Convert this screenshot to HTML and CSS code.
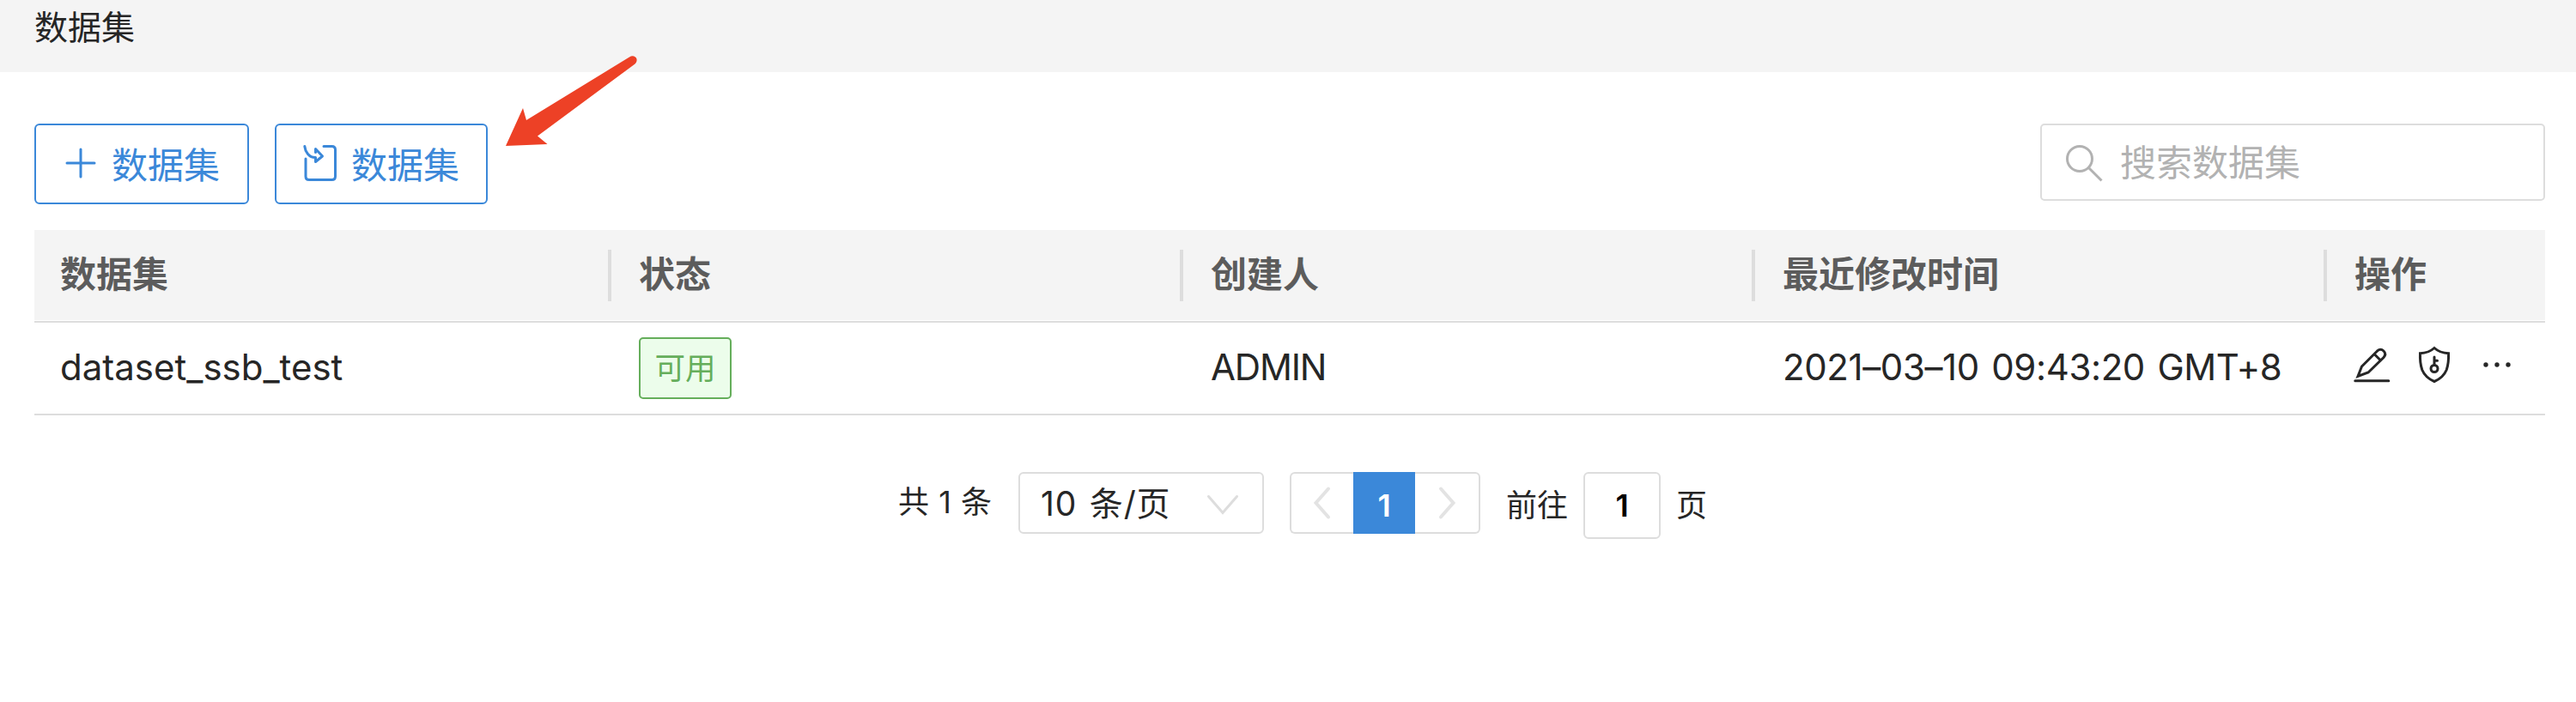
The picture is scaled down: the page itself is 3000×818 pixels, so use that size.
FILE: index.html
```html
<!DOCTYPE html>
<html lang="zh-CN">
<head>
<meta charset="utf-8">
<title>数据集</title>
<link rel="stylesheet" href="styles.css">
</head>
<body>
<header class="topbar"><h1 class="title">数据集</h1></header>
<main class="content">
  <div class="toolbar">
    <button class="btn btn-add">
      <svg class="plus" viewBox="0 0 36 36"><path d="M18 2v32M2 18h32"/></svg>
      <span>数据集</span>
    </button>
    <button class="btn btn-import">
      <svg class="import" viewBox="0 0 40 44"><path d="M24 2.500h9.500q4 0 4 4v31q0 4-4 4H7q-4 0-4-4V17"/><path d="M1.800 2.500C2.500 9 7 15.500 14 15.500M14.500 9.500v-4l8 8.500l-8 6.500v-5" stroke-linejoin="round"/></svg>
      <span>数据集</span>
    </button>
    <svg class="pointer" viewBox="0 0 154 108"><path d="M1 106L21 62l4 14L145 2.500c6-4 12 3 6.500 8L38 94.500l11.500 9.500z"/></svg>
    <label class="search">
      <svg class="glass" viewBox="0 0 44 44"><circle cx="17" cy="17" r="14.500"/><path d="M27.500 27.500L42.500 42.500"/></svg>
      <span>搜索数据集</span>
    </label>
  </div>
  <section class="table">
    <div class="row head">
      <div class="cell">数据集</div>
      <div class="cell">状态</div>
      <div class="cell">创建人</div>
      <div class="cell">最近修改时间</div>
      <div class="cell">操作</div>
    </div>
    <div class="row body">
      <div class="cell name">dataset_ssb_test</div>
      <div class="cell"><span class="tag">可用</span></div>
      <div class="cell user">ADMIN</div>
      <div class="cell time">2021–03–10 09:43:20 GMT+8</div>
      <div class="cell actions">
        <svg class="edit" viewBox="0 0 44 42"><path d="M1.800 39.700h39"/><path d="M5 34.500L9.500 23L27.500 5q4-3.500 7.500 0t0 7.500L17 30z M24 8.500l7.500 7.500"/></svg>
        <svg class="shield" viewBox="0 0 38 44"><path d="M19 2.500Q12.500 8.300 2.500 8.800Q2 20 4.800 28Q8.500 37 19 41.500Q29.500 37 33.200 28Q36 20 35.500 8.800Q25.500 8.300 19 2.500z"/><circle cx="19" cy="26.500" r="4"/><path d="M19 22.500V13M19 17.200h3.500"/></svg>
        <svg class="more" viewBox="0 0 34 8"><circle cx="4" cy="4" r="2.700"/><circle cx="17" cy="4" r="2.700"/><circle cx="30" cy="4" r="2.700"/></svg>
      </div>
    </div>
  </section>
  <nav class="pagination">
    <span class="total">共 1 条</span>
    <div class="select"><span>10 条/页</span><svg class="down" viewBox="0 0 38 26"><path d="M2.500 2.500L19 21.500L35.500 2.500"/></svg></div>
    <div class="pager">
      <div class="step"><svg viewBox="0 0 20 38"><path d="M17 2.500L2.500 19L17 35.500"/></svg></div>
      <div class="page">1</div>
      <div class="step"><svg viewBox="0 0 20 38"><path d="M3 2.500L17.500 19L3 35.500"/></svg></div>
    </div>
    <span class="goto">前往</span>
    <div class="jump">1</div>
    <span class="unit">页</span>
  </nav>
</main>
</body>
</html>
```
FILE: styles.css
```css
* { box-sizing: border-box; }
body {
  margin: 0;
  background: #fff;
  color: #262626;
  font-family: Inter, "Noto Sans CJK SC", sans-serif;
  font-size: 42px;
}
svg { display: block; flex: none; fill: none; stroke: currentColor; stroke-width: 3; stroke-linecap: round; overflow: visible; }
.topbar { height: 84px; padding: 2px 40px 0; background: #f4f4f4; }
.title { margin: 0; font-size: 39px; font-weight: 400; line-height: 60px; }
.content { padding: 60px 36px 0 40px; }

.toolbar { display: flex; height: 124px; align-items: flex-start; position: relative; }
.btn {
  display: flex; align-items: center; height: 94px; padding: 4px 0 0;
  border: 2px solid #3b88d9; border-radius: 6px; background: #fff; color: #3b88d9;
  font: inherit; font-weight: 400; line-height: 60px;
}
.btn-add { width: 250px; padding-left: 34px; margin-right: 30px; }
.btn-import { width: 248px; padding-left: 31px; }
.plus { width: 36px; height: 36px; margin: -6px 18px 0 0; }
.import { width: 40px; height: 44px; margin: -6px 16px 0 0; }
.pointer { position: absolute; left: 548px; top: -80px; width: 154px; height: 108px; fill: #ed4126; stroke: none; }
.search {
  display: flex; align-items: center; width: 588px; height: 90px; margin-left: auto;
  padding: 1px 0 0 27px; border: 2px solid #ddd; border-radius: 5px; color: #b2b2b2;
  font-weight: 400; line-height: 60px;
}
.glass { width: 44px; height: 44px; margin-right: 20px; stroke-linecap: butt; }

.row { display: grid; grid-template-columns: 672px 666px 666px 666px 254px; align-items: center; }
.head {
  height: 106px; background: #f4f4f4; border-bottom: 1px solid #fff;
  color: #5c5c5c; font-weight: 600;
}
.head .cell { height: 60px; padding-left: 32px; line-height: 58px; }
.cell { padding-left: 32px; line-height: 60px; white-space: nowrap; }
.cell:first-child, .head .cell:first-child { padding-left: 30px; }
.head .cell:not(:last-child) { border-right: 4px solid #ddd; }
.body { height: 110px; border-top: 2px solid #ddd; border-bottom: 2px solid #ddd; }
.name, .user, .time { margin-top: -3px; }
.user { letter-spacing: -1.2px; }
.time { letter-spacing: -0.4px; word-spacing: 3px; }
.tag {
  display: block; width: 108px; height: 72px; border: 2px solid #65ae5b; border-radius: 5px;
  background: #ecfdeb; color: #65ae5b; font-size: 35.5px; font-weight: 400; line-height: 70px; text-align: center;
}
.actions { display: flex; align-items: center; padding-left: 31px; margin-top: -9px; }
.edit { width: 44px; height: 42px; }
.shield { width: 38px; height: 44px; margin: 0 37px 0 31px; }
.more { width: 34px; height: 8px; fill: currentColor; stroke: none; }

.pagination { display: flex; align-items: flex-start; margin: 66px 0 0 1006px; font-size: 36px; font-weight: 400; line-height: 71px; white-space: nowrap; }
.total { width: 140px; word-spacing: 1px; }
.select {
  display: flex; align-items: center; justify-content: space-between; width: 286px; height: 72px; margin-right: 30px;
  padding: 0 27px 0 24px; border: 2px solid #ddd; border-radius: 6px; font-size: 39px; letter-spacing: 0.8px; word-spacing: 3px;
}
.down { width: 38px; height: 26px; margin-top: 5px; color: #ddd; }
.pager { display: flex; width: 222px; height: 72px; margin-right: 30px; }
.step { display: flex; align-items: center; justify-content: center; width: 74px; border: 2px solid #ddd; border-radius: 6px 0 0 6px; border-right: 0; color: #e3e3e3; }
.step:last-child { width: 76px; border-right: 2px solid #ddd; border-left: 0; border-radius: 0 6px 6px 0; }
.step svg { width: 20px; height: 38px; stroke-width: 4; }
.page { width: 72px; background: #3b88d9; color: #fff; font-weight: 600; line-height: 78px; text-align: center; }
.goto { width: 90px; line-height: 79px; }
.jump { width: 90px; height: 78px; margin-right: 18px; border: 2px solid #ddd; border-radius: 6px; color: #000; font-weight: 600; line-height: 75px; text-align: center; }
.unit { line-height: 79px; }
```
